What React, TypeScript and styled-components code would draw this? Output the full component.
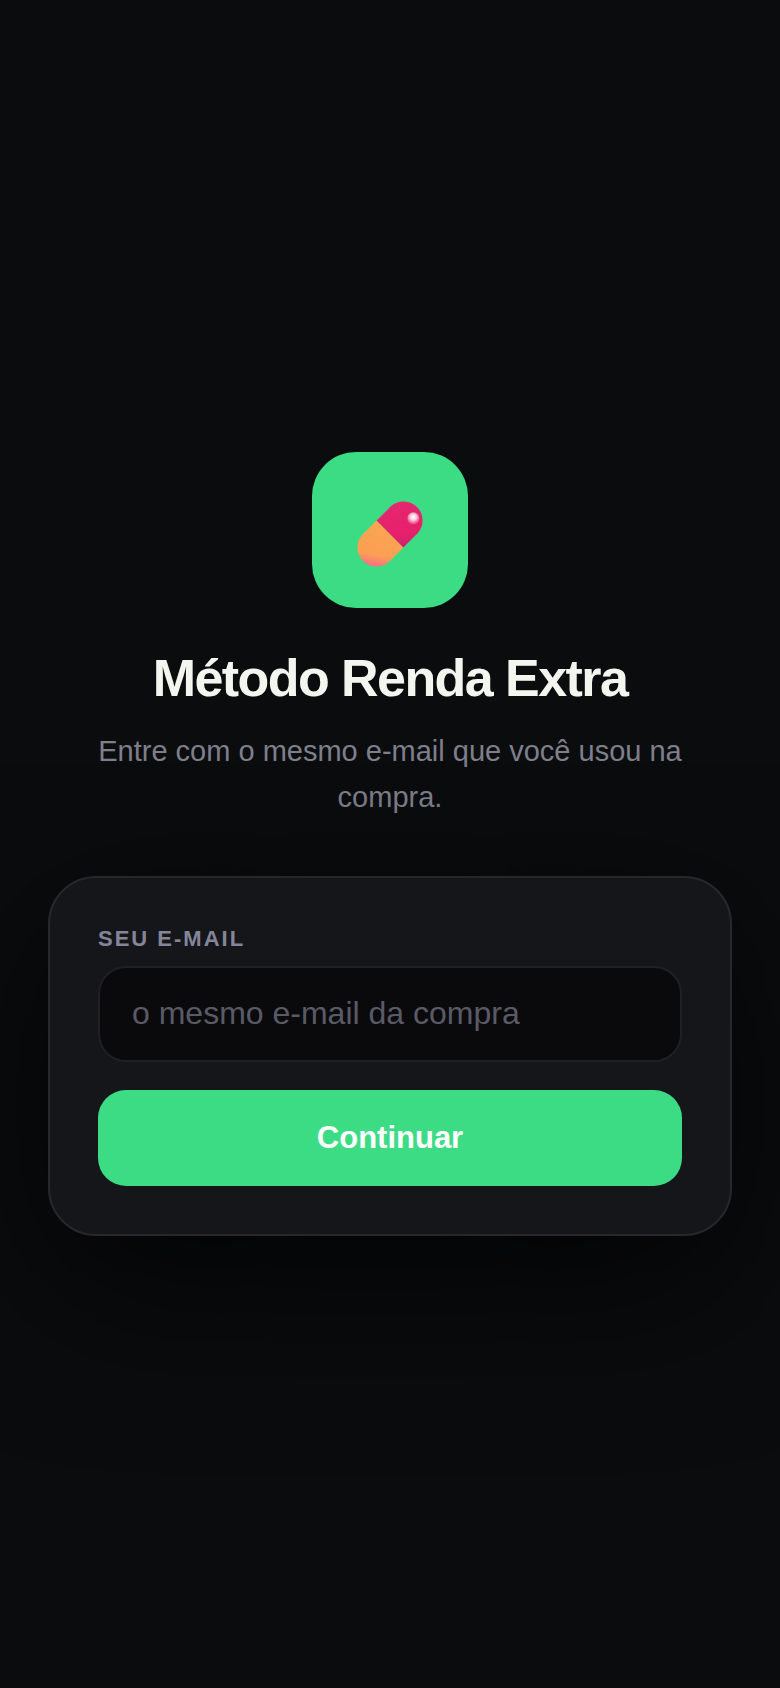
import React from 'react'
import styled, {createGlobalStyle} from 'styled-components'

const GlobalStyle = createGlobalStyle`
  html, body {
    margin: 0;
    padding: 0;
    background: #0b0c0e;
  }
  * {
    box-sizing: border-box;
  }
`

const Page = styled.main`
  min-height: 1688px;
  display: flex;
  flex-direction: column;
  align-items: center;
  justify-content: center;
  padding: 0 48px;
  background: #0b0c0e;
  font-family: "Liberation Sans", Arial, sans-serif;
`

const IconTile = styled.div`
  width: 156px;
  height: 156px;
  border-radius: 44px;
  background: #3cdc85;
  display: flex;
  align-items: center;
  justify-content: center;
  margin-bottom: 40px;
`

const Title = styled.h1`
  margin: 0 0 20px;
  font-size: 52px;
  line-height: 60px;
  font-weight: 700;
  letter-spacing: -1.56px;
  color: #f5f5f0;
  text-align: center;
`

const Subtitle = styled.p`
  margin: 0 0 56px;
  width: 600px;
  font-size: 29px;
  line-height: 46.4px;
  color: #7f7f8c;
  text-align: center;
`

const Card = styled.form`
  width: 100%;
  display: flex;
  flex-direction: column;
  padding: 48px;
  border: 2px solid #28282c;
  border-radius: 48px;
  background: #15161a;
  box-shadow: 0 48px 160px rgba(0, 0, 0, 0.75);
`

const Label = styled.label`
  margin-bottom: 14px;
  font-size: 22px;
  line-height: 26px;
  font-weight: 700;
  letter-spacing: 2px;
  color: #85859a;
`

const EmailInput = styled.input`
  height: 96px;
  margin-bottom: 28px;
  padding: 0 32px 2px;
  border: 2px solid #212125;
  border-radius: 28px;
  background: #0a0a0d;
  outline: none;
  font-family: inherit;
  font-size: 32px;
  color: #f5f5f0;

  &::placeholder {
    color: #5a5a66;
    opacity: 1;
  }
`

const SubmitButton = styled.button`
  height: 96px;
  border: none;
  border-radius: 28px;
  background: #3cdc85;
  font-family: inherit;
  font-size: 31px;
  font-weight: 700;
  color: #fff;
`

const PillIcon = () => (
  <svg width="84" height="84" viewBox="0 -4 84 84" aria-hidden="true">
    <defs>
      <linearGradient id="pillPink" x1="0.4" y1="0" x2="0.6" y2="1">
        <stop offset="0" stopColor="#e4286f"/>
        <stop offset="0.7" stopColor="#e81f6c"/>
        <stop offset="1" stopColor="#c9246f"/>
      </linearGradient>
      <linearGradient id="pillOrange" x1="0.6" y1="0" x2="0.42" y2="1">
        <stop offset="0" stopColor="#fba64f"/>
        <stop offset="0.76" stopColor="#fb9f54"/>
        <stop offset="1" stopColor="#fb7085"/>
      </linearGradient>
      <radialGradient id="pillShine" cy="0.4">
        <stop offset="0" stopColor="#ffffff"/>
        <stop offset="0.5" stopColor="#fbd0de"/>
        <stop offset="1" stopColor="#ee5f94"/>
      </radialGradient>
    </defs>
    <path d="M28.6 28.6L55.4 55.4L40.9 69.9A19 19 0 0 1 14.1 43.1Z" fill="url(#pillOrange)"/>
    <path d="M28.6 28.6L43.1 14.1A19 19 0 0 1 69.9 40.9L55.4 55.4Z" fill="url(#pillPink)"/>
    <circle cx="65.3" cy="26.3" r="6" fill="url(#pillShine)"/>
  </svg>
)

export default function App() {
  return <>
    <GlobalStyle/>
    <Page>
      <IconTile>
        <PillIcon/>
      </IconTile>
      <Title>Método Renda Extra</Title>
      <Subtitle>Entre com o mesmo e-mail que você usou na compra.</Subtitle>
      <Card>
        <Label htmlFor="email">SEU E-MAIL</Label>
        <EmailInput id="email" type="email" placeholder="o mesmo e-mail da compra"/>
        <SubmitButton type="button">Continuar</SubmitButton>
      </Card>
    </Page>
  </>
}
